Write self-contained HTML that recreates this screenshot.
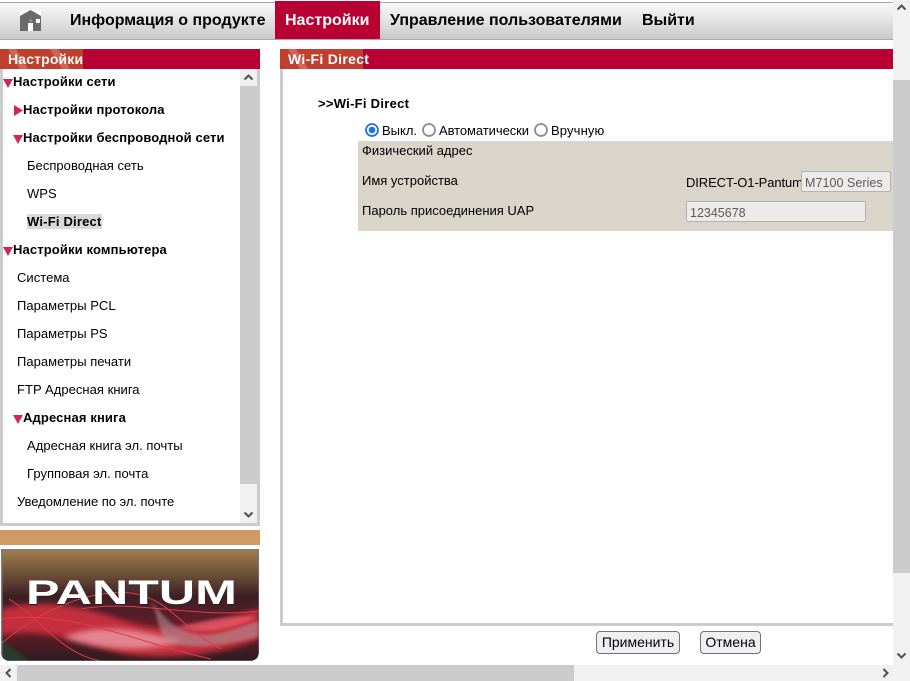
<!DOCTYPE html>
<html><head><meta charset="utf-8">
<style>
html,body{margin:0;padding:0;background:#fff;overflow:hidden}
body{width:910px;height:681px;position:relative;font-family:"Liberation Sans",Arial,sans-serif;color:#000}
div,span{position:absolute;white-space:nowrap}
svg{position:absolute}
.nav{top:11px;font-size:16px;font-weight:bold;line-height:20px}
.i{font-size:13px;line-height:16px;letter-spacing:.03px}
.b{font-weight:bold;letter-spacing:.13px}
.t{font-size:13px;line-height:16px;letter-spacing:0}
.inp{background:#edebe7;border:1px solid #b4b2b0;border-radius:2px;box-sizing:border-box;height:21px;color:#5a5a62;font-size:12.5px;line-height:23px;padding-left:3px;letter-spacing:.05px}
.btn{background:#efeff3;border:1px solid #70707a;border-radius:4px;box-sizing:border-box;height:23px;font-size:14px;line-height:21px;text-align:center;top:631px}
.hdr{background:#b90033;height:20px;top:49px}
.hl{left:0;top:0;height:20px;background:#c0402f}
.ht{font-size:14px;font-weight:bold;color:#fff;line-height:20px;top:0;letter-spacing:.15px}
</style></head><body>

<!-- top bar -->
<div style="left:0;top:2px;width:893px;height:38px;box-sizing:border-box;border-top:1px solid #aaa;border-bottom:1px solid #aaa;background:linear-gradient(#f8f8f8 0%,#ececec 30%,#c9c9c9 100%)"></div>
<svg style="left:20px;top:10px" width="21" height="21" viewBox="0 0 21 21"><rect width="21" height="7" fill="#fbfbfb"/><path d="M10.500 0 L0 6 V21 H21 V6 Z" fill="#6a6a6a"/><rect x="16" y="9" width="4" height="4" fill="#fff"/><rect x="8" y="13" width="5" height="8" fill="#fff"/><rect x="9" y="9" width="3" height="3" fill="#8a8a8a"/></svg>
<div class="nav" style="left:70px">Информация о продукте</div>
<div style="left:275px;top:1px;width:105px;height:38px;background:#b90033"></div>
<div class="nav" style="left:285px;color:#fff">Настройки</div>
<div class="nav" style="left:390px">Управление пользователями</div>
<div class="nav" style="left:642px">Выйти</div>

<!-- sidebar header -->
<div class="hdr" style="left:0;width:260px"><div class="hl" style="width:83px"></div>
<svg style="left:0;top:0" width="83" height="20"><path d="M50 0 L62 20 H70 L58 0Z M8 0 L20 20 H28 L16 0Z" fill="#d9806f" opacity=".6"/></svg>
<div class="ht" style="left:8px">Настройки</div></div>

<!-- sidebar frame -->
<div style="left:0;top:69px;width:3px;height:457px;background:#ccc"></div>
<div style="left:0;top:523px;width:260px;height:3px;background:#ccc"></div>
<div style="left:240px;top:69px;width:20px;height:457px;background:#ccc"></div>
<div style="left:240px;top:69px;width:17px;height:17px;background:#f1f1f1"></div>
<div style="left:240px;top:484px;width:17px;height:39px;background:#f1f1f1"></div>
<svg style="left:240px;top:69px" width="17" height="17"><path d="M4.500 10.500 L8.500 6.500 L12.500 10.500" fill="none" stroke="#505050" stroke-width="2"/></svg>
<svg style="left:240px;top:506px" width="17" height="17"><path d="M4.500 6.500 L8.500 10.500 L12.500 6.500" fill="none" stroke="#505050" stroke-width="2"/></svg>

<!-- tree -->
<svg style="left:0;top:70px" width="30" height="360">
<g fill="#d5264f">
<path d="M3 9 H13 L8 18Z"/>
<path d="M14 35 V46 L23 40.500Z"/>
<path d="M13 65 H23 L18 74Z"/>
<path d="M3 177 H13 L8 186Z"/>
<path d="M13 345 H23 L18 354Z"/>
</g></svg>
<div class="i b" style="left:13px;top:74px">Настройки сети</div>
<div class="i b" style="left:23px;top:102px">Настройки протокола</div>
<div class="i b" style="left:23px;top:130px">Настройки беспроводной сети</div>
<div class="i" style="left:27px;top:158px">Беспроводная сеть</div>
<div class="i" style="left:27px;top:186px">WPS</div>
<div style="left:27px;top:214px;width:75px;height:15px;background:#d9d9d9"></div>
<div class="i b" style="left:27px;top:214px;letter-spacing:.2px">Wi-Fi Direct</div>
<div class="i b" style="left:13px;top:242px">Настройки компьютера</div>
<div class="i" style="left:17px;top:270px">Система</div>
<div class="i" style="left:17px;top:298px">Параметры PCL</div>
<div class="i" style="left:17px;top:326px">Параметры PS</div>
<div class="i" style="left:17px;top:354px">Параметры печати</div>
<div class="i" style="left:17px;top:382px">FTP Адресная книга</div>
<div class="i b" style="left:23px;top:410px">Адресная книга</div>
<div class="i" style="left:27px;top:438px">Адресная книга эл. почты</div>
<div class="i" style="left:27px;top:466px">Групповая эл. почта</div>
<div class="i" style="left:17px;top:494px;letter-spacing:-.03px">Уведомление по эл. почте</div>

<!-- orange bar -->
<div style="left:0;top:530px;width:260px;height:15px;background:#cf9a66"></div>

<!-- logo -->
<svg style="left:1px;top:549px" width="259" height="113" viewBox="0 0 259 113">
<defs>
<linearGradient id="g" x1="0" y1="0" x2="0" y2="1">
<stop offset="0" stop-color="#a1814d"/><stop offset=".22" stop-color="#6e5038"/><stop offset=".42" stop-color="#3c1f24"/><stop offset=".7" stop-color="#6a1c2a"/><stop offset="1" stop-color="#2a1c20"/>
</linearGradient>
<filter id="bl" x="-10%" y="-30%" width="120%" height="160%"><feGaussianBlur stdDeviation="3"/></filter>
<filter id="bl2" x="-10%" y="-30%" width="120%" height="160%"><feGaussianBlur stdDeviation="1.500"/></filter>
<clipPath id="c"><path d="M0 0 H258 V102 Q258 112 248 112 H10 Q0 112 0 102Z"/></clipPath>
</defs>
<g clip-path="url(#c)">
<rect width="259" height="113" fill="url(#g)"/>
<path d="M0 90 L30 113 H0Z" fill="#2c3a2c" filter="url(#bl2)"/>
<path d="M0 60 C50 48 90 60 130 74 C180 88 220 70 258 60 V90 C220 106 170 110 130 106 C90 100 50 76 0 86Z" fill="#d0323f" opacity=".9" filter="url(#bl)"/>
<path d="M62 88 C105 72 140 82 182 92 C150 104 100 102 62 88Z" fill="#ec9aa4" opacity=".8" filter="url(#bl)"/>
<path d="M148 52 C162 62 164 76 190 84 C215 90 235 78 258 72 V88 C220 98 180 102 165 90 C155 80 158 62 148 52Z" fill="#b09a9e" opacity=".55" filter="url(#bl2)"/>
<path d="M176 78 C195 74 225 66 255 68 C232 80 205 86 176 78Z" fill="#f06a78" opacity=".6" filter="url(#bl2)"/>
<g fill="none" stroke="#e03a4c" stroke-width="1">
<path d="M0 95 C40 60 90 40 130 44 C170 50 180 80 220 100"/>
<path d="M8 50 C40 70 60 105 100 112"/>
<path d="M0 70 C70 60 140 95 210 110"/>
<path d="M80 60 C130 50 200 70 258 62"/>
</g>
<rect x="0" y="0" width="259" height="113" fill="none" stroke="#7b7b7b" stroke-width="3" rx="4"/>
</g>
<text x="25.500" y="56" font-family="Liberation Sans" font-weight="bold" font-size="34" textLength="211" lengthAdjust="spacingAndGlyphs" fill="#222">PANTUM</text>
<text x="25" y="55" font-family="Liberation Sans" font-weight="bold" font-size="34" textLength="211" lengthAdjust="spacingAndGlyphs" fill="#fff">PANTUM</text>
</svg>

<!-- main header -->
<div class="hdr" style="left:280px;width:613px"><div class="hl" style="width:83px"></div>
<svg style="left:0;top:0" width="83" height="20"><path d="M8 0 L20 20 H28 L16 0Z" fill="#d9806f" opacity=".6"/></svg>
<div class="ht" style="left:8px;letter-spacing:.3px">Wi-Fi Direct</div></div>

<!-- main frame -->
<div style="left:280px;top:69px;width:3px;height:557px;background:#ccc"></div>
<div style="left:280px;top:623px;width:613px;height:3px;background:#ccc"></div>

<div class="i b" style="left:318px;top:96px;letter-spacing:.28px">&gt;&gt;Wi-Fi Direct</div>

<!-- radios -->
<svg style="left:365px;top:123px" width="15" height="14"><circle cx="7" cy="7" r="6" fill="#fff" stroke="#1a73e8" stroke-width="1.800"/><circle cx="7" cy="7" r="3.300" fill="#1a73e8"/></svg>
<div class="t" style="left:382px;top:123px">Выкл.</div>
<svg style="left:422px;top:123px" width="15" height="14"><circle cx="7" cy="7" r="6" fill="#fff" stroke="#8a8a96" stroke-width="1.800"/></svg>
<div class="t" style="left:439px;top:123px;letter-spacing:-.07px">Автоматически</div>
<svg style="left:534px;top:123px" width="15" height="14"><circle cx="7" cy="7" r="6" fill="#fff" stroke="#8a8a96" stroke-width="1.800"/></svg>
<div class="t" style="left:551px;top:123px;letter-spacing:.14px">Вручную</div>

<!-- table -->
<div style="left:358px;top:141px;width:535px;height:90px;background:#d9d5cb"></div>
<div class="t" style="left:362px;top:143px">Физический адрес</div>
<div class="t" style="left:362px;top:173px">Имя устройства</div>
<div class="t" style="left:362px;top:203px">Пароль присоединения UAP</div>
<div class="t" style="left:686px;top:175px;letter-spacing:-.1px">DIRECT-O1-Pantum</div>
<div class="inp" style="left:801px;top:171px;width:90px">M7100 Series</div>
<div class="inp" style="left:686px;top:201px;width:180px;letter-spacing:0">12345678</div>

<!-- buttons -->
<div class="btn" style="left:596px;width:84px">Применить</div>
<div class="btn" style="left:700px;width:61px">Отмена</div>

<!-- page scrollbars -->
<div style="left:893px;top:0;width:17px;height:665px;background:#f1f1f1"></div>
<div style="left:893px;top:80px;width:17px;height:493px;background:#ccc"></div>
<svg style="left:893px;top:0" width="17" height="17"><path d="M4.500 9.500 L8.500 5.500 L12.500 9.500" fill="none" stroke="#505050" stroke-width="2"/></svg>
<svg style="left:893px;top:648px" width="17" height="17"><path d="M4.500 5.500 L8.500 9.500 L12.500 5.500" fill="none" stroke="#505050" stroke-width="2"/></svg>
<div style="left:0;top:665px;width:910px;height:16px;background:#f1f1f1"></div>
<div style="left:17px;top:665px;width:557px;height:16px;background:#ccc"></div>
<svg style="left:0;top:665px" width="17" height="16"><path d="M10.500 4 L6.500 8 L10.500 12" fill="none" stroke="#505050" stroke-width="2"/></svg>
<svg style="left:877px;top:665px" width="17" height="16"><path d="M6.500 4 L10.500 8 L6.500 12" fill="none" stroke="#505050" stroke-width="2"/></svg>

</body></html>
